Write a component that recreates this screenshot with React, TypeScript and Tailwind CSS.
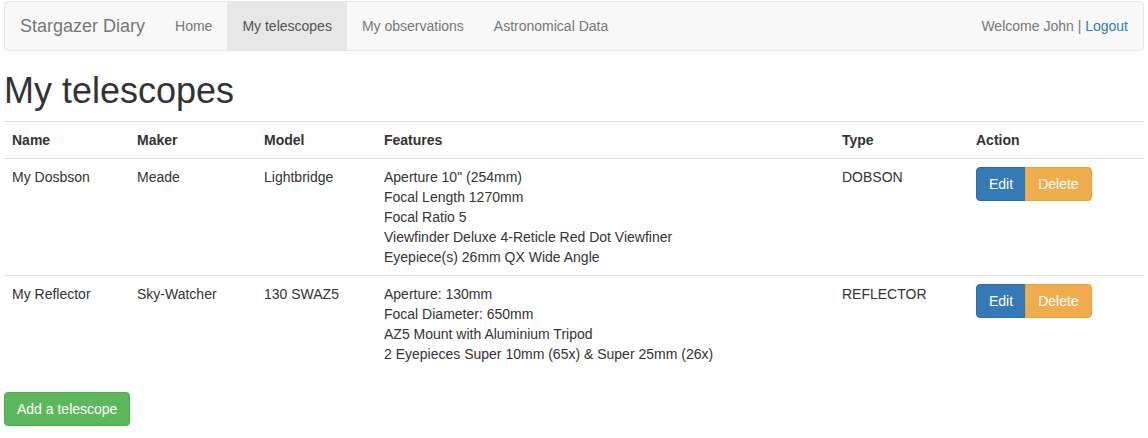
import React from 'react';

interface Telescope {
  name: string;
  maker: string;
  model: string;
  features: string[];
  type: string;
}

const telescopes: Telescope[] = [
  {
    name: 'My Dosbson',
    maker: 'Meade',
    model: 'Lightbridge',
    features: [
      'Aperture 10" (254mm)',
      'Focal Length 1270mm',
      'Focal Ratio 5',
      'Viewfinder Deluxe 4-Reticle Red Dot Viewfiner',
      'Eyepiece(s) 26mm QX Wide Angle',
    ],
    type: 'DOBSON',
  },
  {
    name: 'My Reflector',
    maker: 'Sky-Watcher',
    model: '130 SWAZ5',
    features: [
      'Aperture: 130mm',
      'Focal Diameter: 650mm',
      'AZ5 Mount with Aluminium Tripod',
      '2 Eyepieces Super 10mm (65x) & Super 25mm (26x)',
    ],
    type: 'REFLECTOR',
  },
];

const navLinks = ['Home', 'My telescopes', 'My observations', 'Astronomical Data'];

export default function App() {
  return (
    <div className="min-h-[438px] bg-white px-[4px] pt-[1px] text-[14px] leading-[20px] text-[#333] font-['Liberation_Sans',Arial,sans-serif]">
      <nav className="flex h-[50px] items-stretch justify-between rounded-[4px] border border-[#e7e7e7] bg-[#f8f8f8]">
        <div className="flex items-stretch">
          <span className="flex items-center px-[15px] text-[18px] text-[#777]">Stargazer Diary</span>
          {navLinks.map((link) => (
            <span
              key={link}
              className={
                link === 'My telescopes'
                  ? 'flex items-center bg-[#e7e7e7] px-[15px] text-[#555]'
                  : 'flex items-center px-[15px] text-[#777]'
              }
            >
              {link}
            </span>
          ))}
        </div>
        <div className="mr-[15px] flex items-center text-[#777]">
          Welcome John |&nbsp;<span className="text-[#337ab7]">Logout</span>
        </div>
      </nav>

      <h1 className="mt-[20px] mb-[10px] text-[36px] leading-[39.6px] font-normal">My telescopes</h1>

      <table className="mb-[20px] w-full border-collapse table-fixed">
        <colgroup>
          <col className="w-[125px]" />
          <col className="w-[127px]" />
          <col className="w-[120px]" />
          <col className="w-[458px]" />
          <col className="w-[134px]" />
          <col className="w-[176px]" />
        </colgroup>
        <thead>
          <tr className="border-t border-b border-[#ddd]">
            {['Name', 'Maker', 'Model', 'Features', 'Type', 'Action'].map((h) => (
              <th key={h} className="p-[8px] text-left font-bold">
                {h}
              </th>
            ))}
          </tr>
        </thead>
        <tbody>
          {telescopes.map((t, i) => (
            <tr key={t.name} className={i > 0 ? 'border-t border-[#ddd] align-top' : 'align-top'}>
              <td className="p-[8px]">{t.name}</td>
              <td className="p-[8px]">{t.maker}</td>
              <td className="p-[8px]">{t.model}</td>
              <td className="p-[8px]">
                {t.features.map((f) => (
                  <div key={f}>{f}</div>
                ))}
              </td>
              <td className="p-[8px]">{t.type}</td>
              <td className="p-[8px]">
                <div className="flex">
                  <button className="rounded-l-[4px] border border-[#2e6da4] bg-[#337ab7] px-[12px] py-[6px] text-white">
                    Edit
                  </button>
                  <button className="-ml-px rounded-r-[4px] border border-[#eea236] bg-[#f0ad4e] px-[12px] py-[6px] text-white">
                    Delete
                  </button>
                </div>
              </td>
            </tr>
          ))}
        </tbody>
      </table>

      <button className="rounded-[4px] border border-[#4cae4c] bg-[#5cb85c] px-[12px] py-[6px] text-white">
        Add a telescope
      </button>
    </div>
  );
}
